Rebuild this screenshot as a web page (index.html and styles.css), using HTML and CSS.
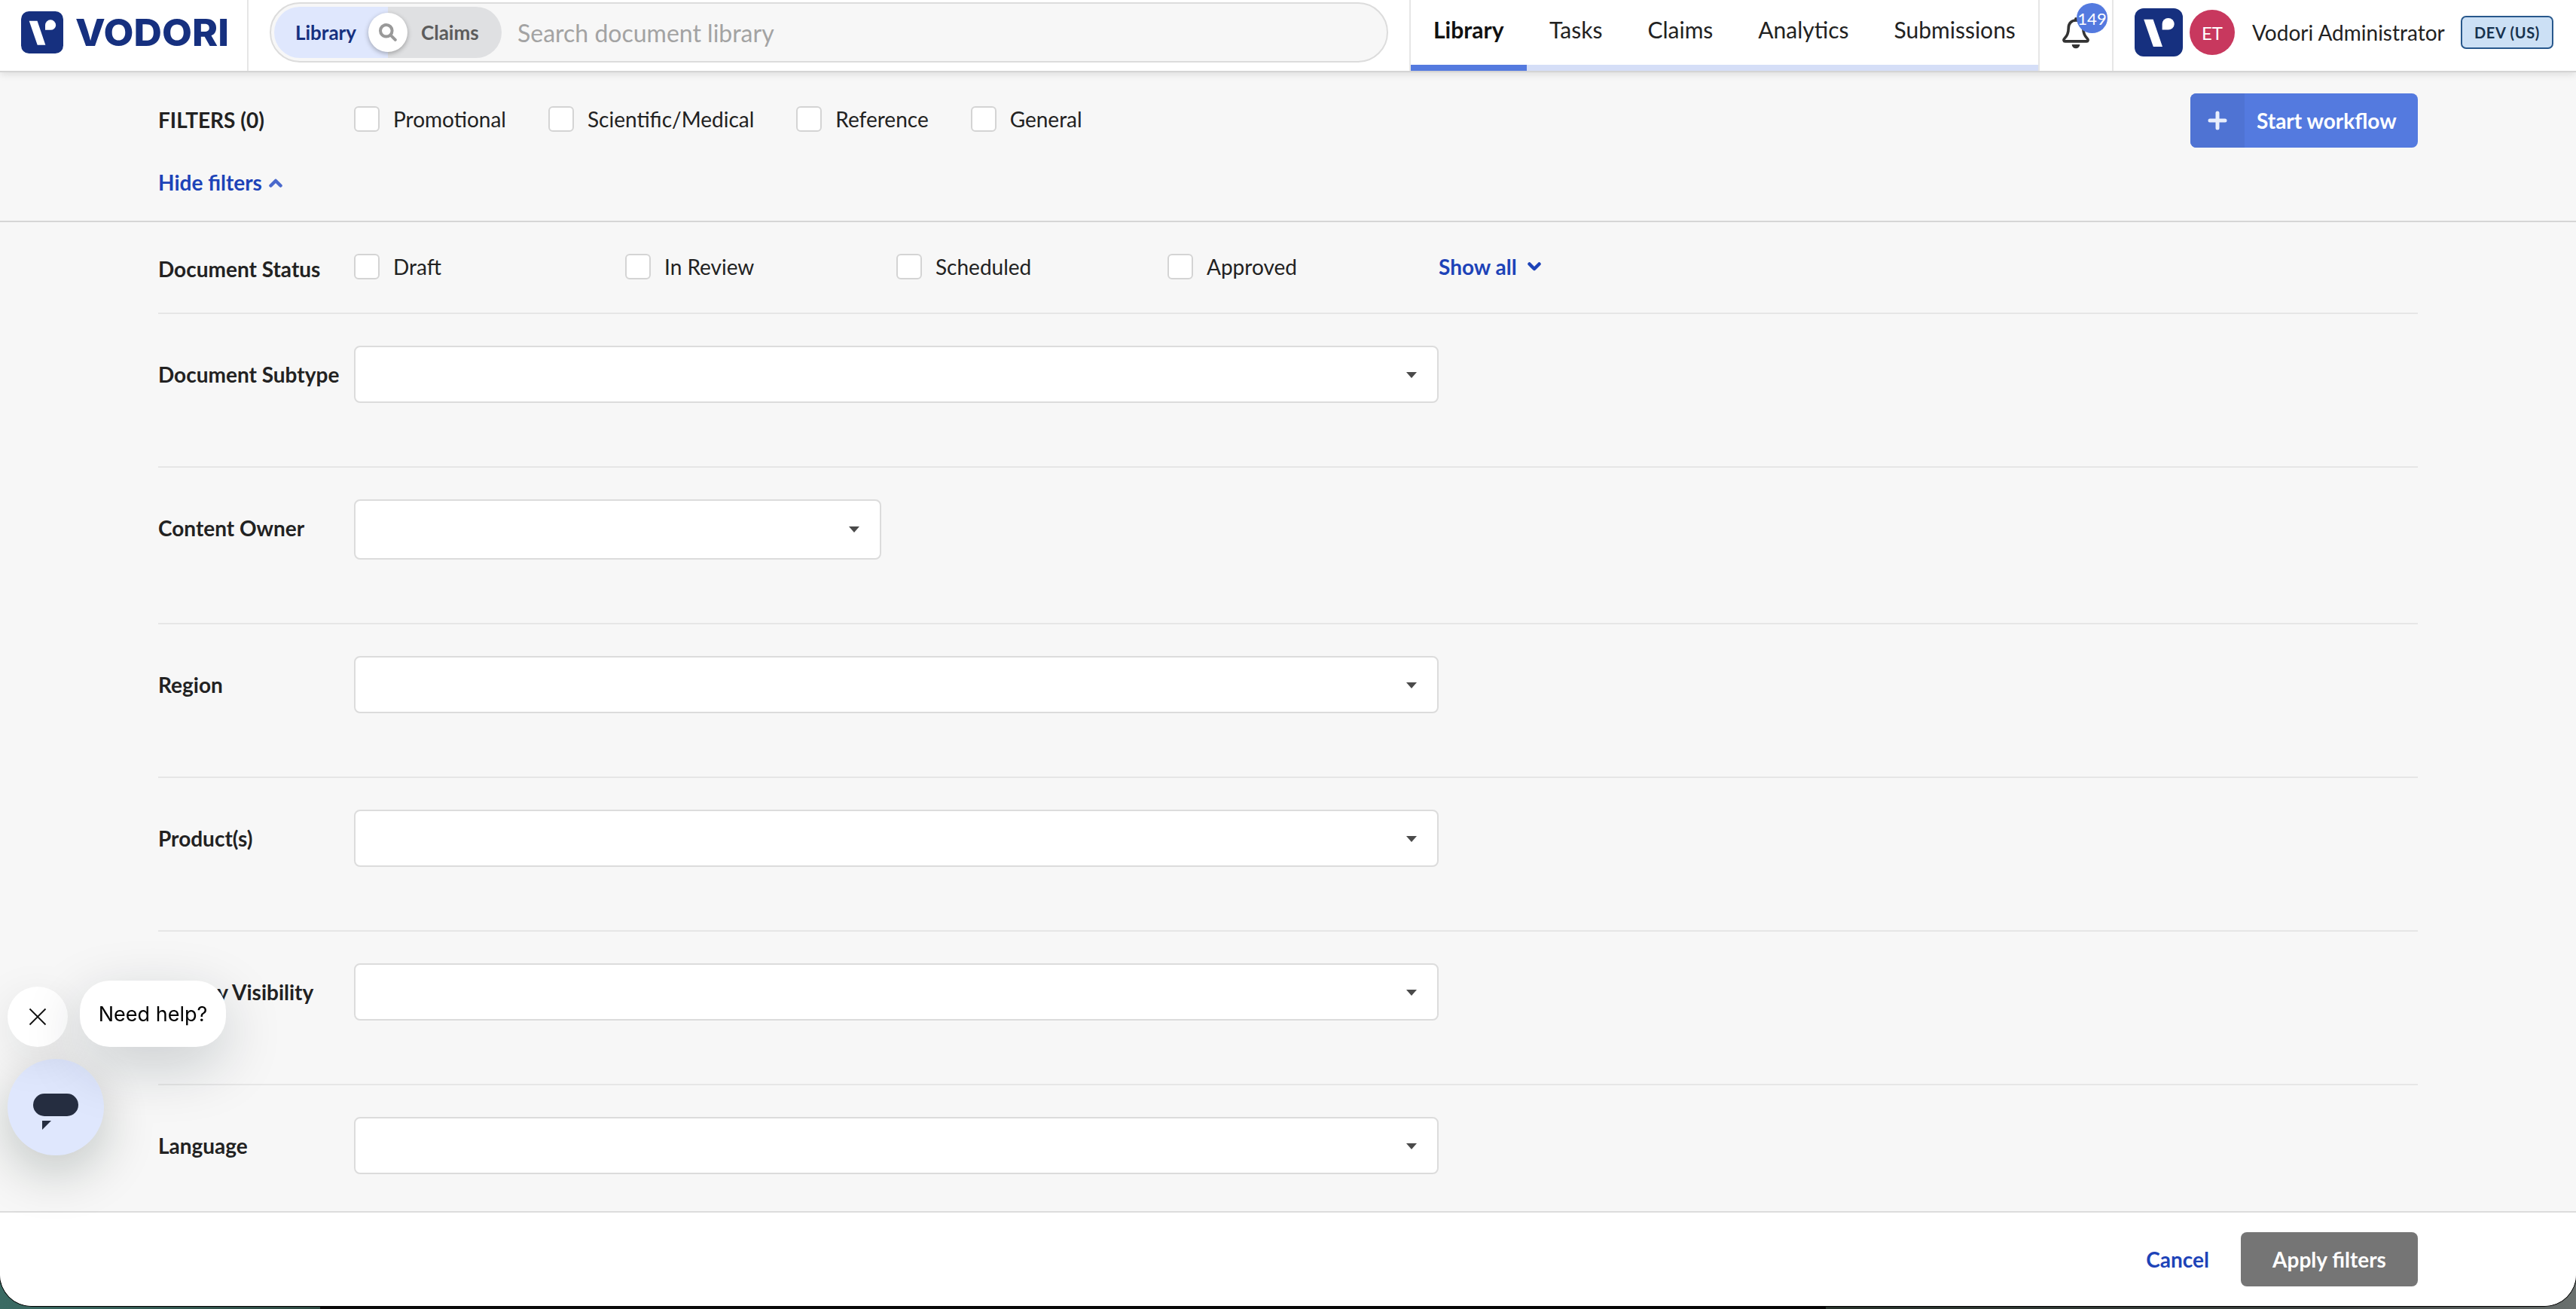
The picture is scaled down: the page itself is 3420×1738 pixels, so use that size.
FILE: index.html
```
<!DOCTYPE html>
<html lang="en">
<head>
    <meta charset="UTF-8">
    <meta name="viewport" content="width=device-width, initial-scale=1.0">
    <title>Vodori - Document Library</title>
    <link rel="stylesheet" href="styles.css">
</head>
<body>
    <svg width="0" height="0" class="defs">
        <symbol id="vodori-mark" viewBox="0 0 64 64">
            <rect width="64" height="64" rx="12" fill="#16307f"/>
            <path d="M12.2 14.7h12.400L37 51H24.800z" fill="#fff"/>
            <path d="M36.6 28.4V21a8.05 8.05 0 0 1 16.1 0a8 7.4 0 0 1-8 7.4z" fill="#fff"/>
        </symbol>
    </svg>

    <div class="window">
        <header class="header">
            <a class="brand" href="#">
                <svg class="brand-mark"><use href="#vodori-mark"/></svg>
                <svg class="brand-name" viewBox="0 0 202 56"><text x="-1" y="46.3" textLength="204" lengthAdjust="spacingAndGlyphs">VODORI</text></svg>
            </a>
            <div class="search-area">
                <div class="search">
                    <div class="toggle">
                        <span class="toggle-item active">Library</span>
                        <span class="toggle-item">Claims</span>
                        <span class="toggle-knob">
                            <svg width="24" height="24" viewBox="0 0 24 24" fill="none" stroke="#999" stroke-width="4" stroke-linecap="round"><circle cx="9.800" cy="9.800" r="7.800"/><path d="M15.800 15.800l6 6"/></svg>
                        </span>
                    </div>
                    <span class="placeholder">Search document library</span>
                </div>
            </div>
            <nav class="nav">
                <a href="#" class="active">Library</a>
                <a href="#">Tasks</a>
                <a href="#">Claims</a>
                <a href="#">Analytics</a>
                <a href="#">Submissions</a>
            </nav>
            <div class="alerts">
                <svg width="38" height="42" viewBox="0 0 38 42" fill="none" stroke="#333" stroke-width="3.6" stroke-linejoin="round" stroke-linecap="round"><path d="M18 1.800v2"/><path d="M18 4c-6.200 0-9.800 4.600-9.800 10.500c0 7-2 10.500-5.400 13.700c-1.600 1.600-.8 3.700.8 3.700h28.800c1.600 0 2.400-2.100.8-3.700c-3.400-3.200-5.400-6.700-5.400-13.700C27.800 8.600 24.200 4 18 4z"/><path d="M12.700 36h10.600a5.300 5.300 0 0 1-10.600 0z" fill="#333" stroke="none"/></svg>
                <span class="badge">149</span>
            </div>
            <div class="user">
                <svg class="user-mark"><use href="#vodori-mark"/></svg>
                <span class="avatar">ET</span>
                <span class="user-name">Vodori Administrator</span>
                <span class="env">DEV (US)</span>
            </div>
        </header>

        <section class="filter-bar">
            <div class="filter-top">
                <h1>FILTERS (0)</h1>
                <label class="check"><i></i>Promotional</label>
                <label class="check"><i></i>Scientific/Medical</label>
                <label class="check"><i></i>Reference</label>
                <label class="check"><i></i>General</label>
                <button class="btn-start">
                    <span class="btn-icon"><svg width="26" height="26" viewBox="0 0 26 26" stroke="#e8eefc" stroke-width="5" stroke-linecap="round"><path d="M13 3v20M3 13h20"/></svg></span>
                    <span class="btn-text">Start workflow</span>
                </button>
            </div>
            <a class="link hide-link" href="#">Hide filters<svg width="18" height="12" viewBox="0 0 18 12" fill="none" stroke="#4a69cc" stroke-width="4.500" stroke-linecap="round" stroke-linejoin="round"><path d="M2.500 9.500L9 3l6.500 6.500"/></svg></a>
        </section>

        <main class="filters">
            <div class="row status-row">
                <h2>Document Status</h2>
                <div class="statuses">
                    <label class="check"><i></i>Draft</label>
                    <label class="check"><i></i>In Review</label>
                    <label class="check"><i></i>Scheduled</label>
                    <label class="check"><i></i>Approved</label>
                    <a class="link" href="#">Show all<svg width="18" height="12" viewBox="0 0 18 12" fill="none" stroke="#1d43b8" stroke-width="4.500" stroke-linecap="round" stroke-linejoin="round"><path d="M2.500 2.500L9 9l6.500-6.500"/></svg></a>
                </div>
            </div>
            <div class="row">
                <h2>Document Subtype</h2>
                <div class="select"></div>
            </div>
            <div class="row">
                <h2>Content Owner</h2>
                <div class="select select-small"></div>
            </div>
            <div class="row">
                <h2>Region</h2>
                <div class="select"></div>
            </div>
            <div class="row">
                <h2>Product(s)</h2>
                <div class="select"></div>
            </div>
            <div class="row">
                <h2>Agency Visibility</h2>
                <div class="select"></div>
            </div>
            <div class="row">
                <h2>Language</h2>
                <div class="select"></div>
            </div>
        </main>

        <footer class="footer">
            <a class="link" href="#">Cancel</a>
            <button class="btn-apply">Apply filters</button>
        </footer>
    </div>

    <!-- Help widget -->
    <div class="help">
        <div class="help-row">
            <button class="help-close"><svg width="24" height="24" viewBox="0 0 24 24" stroke="#111" stroke-width="1.800"><path d="M1.500 1.500l21 21M22.500 1.500l-21 21"/></svg></button>
            <div class="help-text">Need help?</div>
        </div>
        <button class="help-launcher">
            <svg width="60" height="48" viewBox="0 0 60 48" fill="#252d40"><rect width="60" height="30" rx="15"/><path d="M12 36h12L12 48z"/></svg>
        </button>
    </div>
</body>
</html>
```
FILE: styles.css
```
* {
    box-sizing: border-box;
}
body {
    margin: 0;
    height: 1738px;
    overflow: hidden;
    font-family: Lato, "Liberation Sans", sans-serif;
    font-size: 28px;
    line-height: 34px;
    color: #222;
    background: linear-gradient(90deg, #3a6a63 0, #2f4a42 425px, #0c0c0c 425px, #060606 2424px, #263029 2424px, #3a3f3d 3100px, #6a706e 3420px);
}
h1, h2 {
    margin: 0;
    font-size: 28px;
    font-weight: 700;
}
a {
    color: inherit;
    text-decoration: none;
}
button {
    padding: 0;
    border: none;
    font: inherit;
    cursor: pointer;
}
.defs {
    position: absolute;
}
.window {
    display: flex;
    flex-direction: column;
    height: 1734px;
    background: #f7f7f7;
    border-radius: 0 0 42px 42px;
    overflow: hidden;
    box-shadow: 0 0 0 1px #000;
}

/* Header */
.header {
    display: flex;
    flex: none;
    height: 96px;
    background: #fff;
    border-bottom: 2px solid #d4d4d4;
    box-shadow: 0 2px 10px rgba(0, 0, 0, 0.12);
}
.brand {
    display: flex;
    gap: 17px;
    width: 330px;
    padding: 15px 0 0 28px;
    border-right: 2px solid #e6e6e6;
}
.brand-mark {
    width: 56px;
    height: 56px;
}
.brand-name {
    width: 202px;
    height: 56px;
    overflow: visible;
    fill: #16307f;
    font: 800 49px Inter, sans-serif;
}
.search-area {
    width: 1543px;
    padding: 3px 28px 0;
    border-right: 2px solid #e6e6e6;
}
.search {
    display: flex;
    align-items: center;
    width: 1485px;
    height: 80px;
    padding-left: 4px;
    background: #f7f7f7;
    border: 2px solid #dcdcdc;
    border-radius: 40px;
}
.toggle {
    position: relative;
    display: flex;
    width: 302px;
    height: 68px;
    border-radius: 34px;
    overflow: hidden;
    font-size: 26px;
    font-weight: 700;
    line-height: 69px;
}
.toggle-item {
    width: 151px;
    padding-left: 44px;
    color: #5c5c5c;
    background: #dfe0e2;
}
.toggle-item.active {
    padding-left: 28px;
    color: #16307f;
    background: #dfe7fd;
}
.toggle-knob {
    position: absolute;
    left: 125px;
    top: 8px;
    display: flex;
    align-items: center;
    justify-content: center;
    width: 52px;
    height: 52px;
    background: #fff;
    border-radius: 50%;
    box-shadow: 0 2px 6px rgba(0, 0, 0, 0.3);
}
.placeholder {
    margin: 2px 0 0 21px;
    font-size: 32px;
    color: #a3a3a3;
}
.nav {
    display: flex;
    width: 833px;
}
.nav a {
    padding: 22px 30px 0;
    border-bottom: 8px solid #d5def7;
    font-size: 30px;
}
.nav a.active {
    padding-right: 30.5px;
    border-color: #547adf;
    font-weight: 700;
    color: #111;
}
.nav a:last-child {
    flex: 1;
}
.alerts {
    position: relative;
    width: 100px;
    padding: 23px 0 0 30px;
    border-left: 2px solid #e6e6e6;
    border-right: 2px solid #e6e6e6;
}
.badge {
    position: absolute;
    left: 49px;
    top: 4px;
    width: 41px;
    height: 40px;
    background: #547adf;
    border-radius: 50%;
    color: #fff;
    font-size: 22px;
    line-height: 41px;
    text-align: center;
}
.user {
    display: flex;
    align-items: center;
    padding: 0 0 8px 28px;
}
.user-mark {
    width: 64px;
    height: 64px;
}
.avatar {
    width: 60px;
    height: 60px;
    margin-left: 9px;
    background: #c8385e;
    border-radius: 50%;
    color: #fff;
    font-size: 24px;
    line-height: 61px;
    text-align: center;
}
.user-name {
    width: 277px;
    margin-left: 23px;
    white-space: nowrap;
}
.env {
    width: 123px;
    height: 44px;
    background: #cce0f5;
    border: 2px solid #28588c;
    border-radius: 7px;
    color: #17324f;
    font-size: 20px;
    font-weight: 700;
    line-height: 41px;
    text-align: center;
    letter-spacing: 0.7px;
}

/* Filters */
.filter-bar {
    flex: none;
    height: 199px;
    padding: 28px 210px 0;
    border-bottom: 2px solid #d6d6d6;
}
.filter-top {
    display: flex;
    align-items: center;
    height: 72px;
}
.filter-top h1 {
    width: 260px;
    padding-bottom: 3px;
}
.filter-top .check {
    margin: 0 56px 4px 0;
}
.check {
    display: flex;
    align-items: center;
}
.check i {
    width: 34px;
    height: 34px;
    margin-right: 18px;
    background: #fff;
    border: 2px solid #d4d4d4;
    border-radius: 6px;
}
.btn-start {
    display: flex;
    width: 302px;
    height: 72px;
    margin-left: auto;
    background: #547adf;
    border-radius: 8px;
    overflow: hidden;
    color: #fff;
    font-weight: 700;
    line-height: 73px;
}
.btn-icon {
    display: flex;
    align-items: center;
    justify-content: center;
    width: 72px;
    height: 72px;
    background: #4f73d3;
}
.btn-text {
    margin-left: 16px;
}
.link {
    color: #1d43b8;
    font-weight: 700;
}
.hide-link svg {
    margin-left: 9px;
    vertical-align: 4px;
}
.hide-link {
    display: block;
    margin-top: 29px;
}
.filters {
    flex: 1;
    padding: 0 210px;
    overflow: hidden;
}
.row {
    display: flex;
    padding: 42px 0 84px;
    border-bottom: 2px solid #e6e6e6;
}
.row h2 {
    width: 260px;
    padding-top: 21px;
    white-space: nowrap;
}
.row.status-row {
    height: 122px;
    padding: 42px 0 0;
}
.status-row h2 {
    padding-top: 3px;
}
.statuses {
    display: grid;
    grid-template-columns: repeat(4, 360px) auto;
    align-items: start;
}
.statuses .link svg {
    margin-left: 14px;
    vertical-align: 5px;
}
.select {
    display: flex;
    align-items: center;
    justify-content: flex-end;
    width: 1440px;
    height: 76px;
    padding: 2px 27px 0 0;
    background: #fff;
    border: 2px solid #dcdcdc;
    border-radius: 8px;
}
.select-small {
    width: 700px;
    height: 80px;
    padding-top: 0;
}
.select::after {
    content: "";
    border-left: 7.5px solid transparent;
    border-right: 7.5px solid transparent;
    border-top: 8px solid #4a4a4a;
}
.footer {
    display: flex;
    flex: none;
    align-items: center;
    justify-content: flex-end;
    height: 126px;
    padding-right: 210px;
    background: #fff;
    border-top: 2px solid #dcdcdc;
}
.btn-apply {
    width: 235px;
    height: 72px;
    margin-left: 42px;
    background: #757575;
    border-radius: 8px;
    color: #fff;
    font-weight: 700;
}

/* Help widget */
.help {
    position: fixed;
    left: 10px;
    top: 1302px;
}
.help-row {
    display: flex;
    align-items: flex-end;
    gap: 16px;
    height: 88px;
}
.help-close,
.help-launcher {
    display: flex;
    align-items: center;
    justify-content: center;
    border-radius: 50%;
}
.help-close {
    width: 80px;
    height: 80px;
    background: #fff;
    box-shadow: 0 16px 60px rgba(9, 30, 30, 0.1);
}
.help-text {
    width: 194px;
    height: 88px;
    background: #fff;
    border-radius: 40px;
    box-shadow: 0 24px 80px rgba(9, 30, 40, 0.2);
    color: #000;
    font-family: Inter, sans-serif;
    font-size: 27px;
    line-height: 89px;
    text-align: center;
    white-space: nowrap;
}
.help-launcher {
    width: 128px;
    height: 128px;
    margin-top: 16px;
    background: #dfe7fd;
    box-shadow: 0 20px 70px rgba(9, 30, 20, 0.24);
}
.help-launcher svg {
    margin-top: 12px;
}
```
